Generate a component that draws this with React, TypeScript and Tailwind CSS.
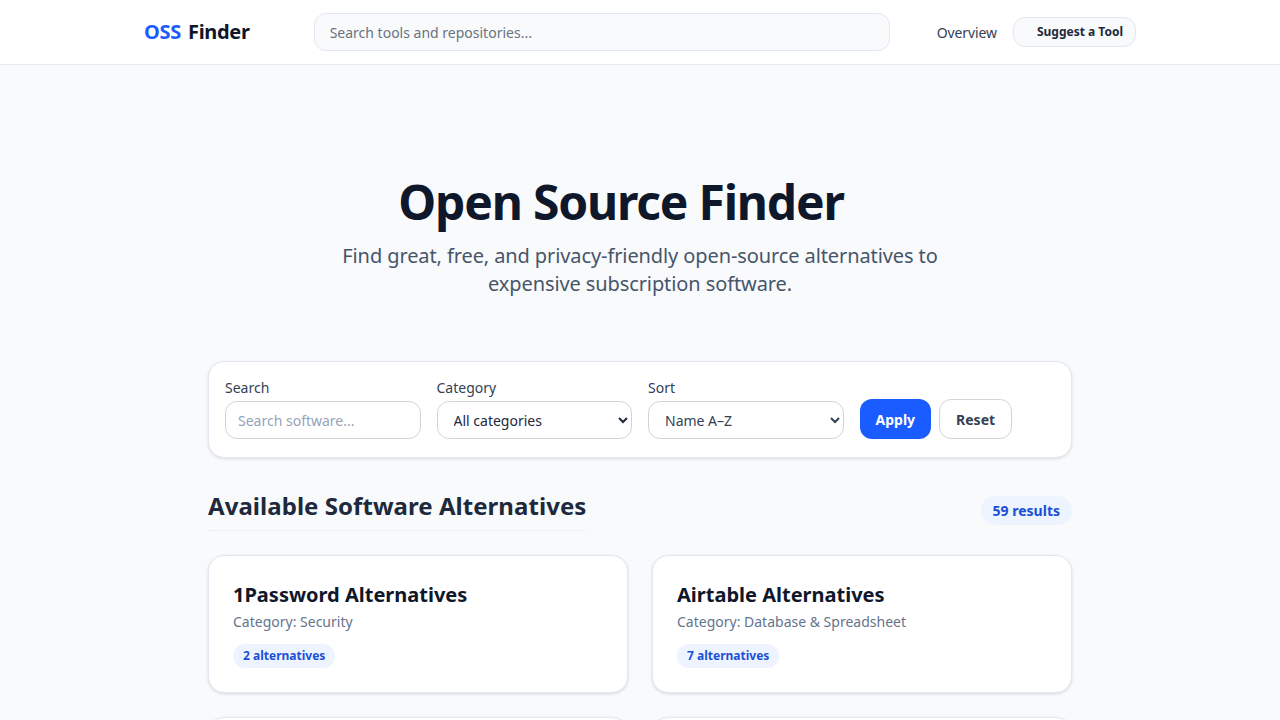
import React from "react";

const font = { fontFamily: '"Noto Sans", "Open Sans", sans-serif' };

const items = [
  { name: "1Password", category: "Security", count: 2 },
  { name: "Airtable", category: "Database & Spreadsheet", count: 7 },
  { name: "Asana", category: "Project Management", count: 4 },
  { name: "Adobe Photoshop", category: "Design", count: 3 },
];

export default function App() {
  return (
    <div className="min-h-screen bg-[#f8fafc] text-[#0f172a]" style={font}>
      <header className="h-[65px] border-b border-[#e2e8f0] bg-white">
        <div className="mx-auto flex h-16 max-w-5xl items-center px-4">
          <a className="flex items-center gap-[7px] text-[20px] font-bold tracking-[-0.3px]">
            <span className="text-[#1a5cff]">OSS</span>
            <span className="text-[#0f172a]">Finder</span>
          </a>
          <div className="ml-[64px] w-[576px]">
            <input
              className="h-[38px] w-full rounded-xl border border-[#e2e8f0] bg-[#f8fafc] px-[15px] text-[14px] text-[#334155] outline-none placeholder:text-[#6b7280]"
              placeholder="Search tools and repositories..."
            />
          </div>
          <nav className="ml-auto flex items-center gap-4">
            <a className="ml-1 text-[14px] tracking-[-0.1px] text-[#334155]">Overview</a>
            <button className="h-[30px] rounded-xl border border-[#e2e8f0] bg-[#f8fafc] pl-[23px] pr-[12px] text-[12px] font-bold text-[#1e293b]">
              Suggest a Tool
            </button>
          </nav>
        </div>
      </header>

      <section className="px-4 pt-[107px] text-center">
        <h1 className="pr-[38px] text-[48px] font-bold leading-[60px] tracking-[-1.2px] text-[#0f172a]">
          Open Source Finder
        </h1>
        <p className="mx-auto mt-[10px] max-w-2xl text-[20px] leading-[28px] tracking-[-0.1px] text-[#475569]">
          Find great, free, and privacy-friendly open-source alternatives to expensive subscription software.
        </p>
      </section>

      <main className="mx-auto mt-[63px] max-w-4xl px-4">
        <form className="rounded-2xl border border-[#e2e8f0] bg-white px-4 pb-[18px] pt-4 shadow-[0_1px_3px_rgba(15,23,42,0.12)]">
          <div className="grid grid-cols-4 items-end gap-4">
            <label className="flex flex-col gap-[3px]">
              <span className="text-[14px] leading-5 text-[#334155]">Search</span>
              <input
                className="h-[38px] rounded-xl border border-[#d1d5db] bg-white px-3 text-[14px] outline-none placeholder:text-[#94a3b8]"
                placeholder="Search software..."
              />
            </label>
            <label className="flex flex-col gap-[3px]">
              <span className="text-[14px] leading-5 text-[#334155]">Category</span>
              <select className="h-[38px] rounded-xl border border-[#d1d5db] bg-white px-3 text-[14px] text-[#1e293b] outline-none">
                <option>All categories</option>
              </select>
            </label>
            <label className="flex flex-col gap-[3px]">
              <span className="text-[14px] leading-5 text-[#334155]">Sort</span>
              <select className="h-[38px] rounded-xl border border-[#d1d5db] bg-white px-3 text-[14px] text-[#334155] outline-none">
                <option>Name A–Z</option>
              </select>
            </label>
            <div className="flex gap-2">
              <button
                type="button"
                className="h-10 rounded-xl bg-[#1a5cff] px-4 text-[14px] font-bold text-white"
              >
                Apply
              </button>
              <button
                type="button"
                className="h-10 rounded-xl border border-[#d1d5db] bg-white px-4 text-[14px] font-bold text-[#334155]"
              >
                Reset
              </button>
            </div>
          </div>
        </form>

        <div className="mt-[32px] flex items-center justify-between">
          <h2 className="border-b border-dotted border-[#e5e7eb] pb-[8px] text-[24px] font-bold leading-8 tracking-[0.05px] text-[#1e293b]">
            Available Software Alternatives
          </h2>
          <span className="mt-[-1px] rounded-full bg-[#eef4ff] px-3 py-[4px] text-[14px] font-bold text-[#1a4fd6]">
            59 results
          </span>
        </div>

        <div className="mt-[24px] grid grid-cols-2 gap-6">
          {items.map((it) => (
            <article
              key={it.name}
              className="rounded-2xl border border-[#e2e8f0] bg-white px-6 pb-6 pt-[25px] shadow-[0_1px_3px_rgba(15,23,42,0.14)]"
            >
              <h3 className="text-[20px] font-bold leading-7 text-[#0f172a]">
                {it.name} Alternatives
              </h3>
              <p className="mt-[3px] text-[14px] leading-5 text-[#64748b]">Category: {it.category}</p>
              <span className="mt-[12px] inline-block rounded-full bg-[#eef4ff] px-[10px] py-[3px] text-[12px] font-bold leading-[18px] text-[#1a4fd6]">
                {it.count} alternatives
              </span>
            </article>
          ))}
        </div>
      </main>
    </div>
  );
}
